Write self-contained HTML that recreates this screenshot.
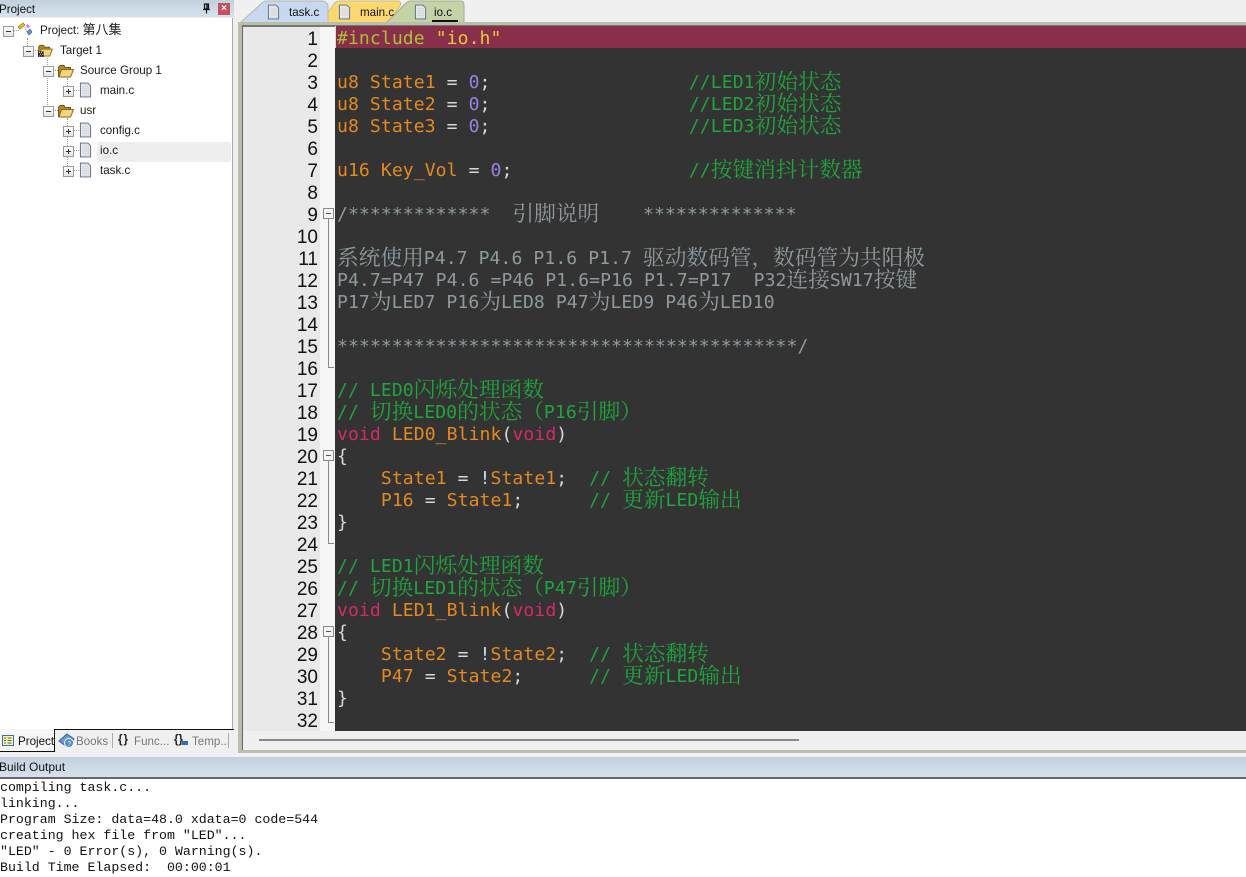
<!DOCTYPE html>
<html><head><meta charset="utf-8"><title>Project</title>
<style>
html,body{margin:0;padding:0;width:1246px;height:877px;overflow:hidden;background:#f0f0f0}
body{position:relative;font-family:"Liberation Sans","Noto Sans CJK SC",sans-serif;font-size:11.6px;color:#1a1a1a}
.a{position:absolute}
.hd{background:linear-gradient(#c2d0df,#d6e1ed)}
.t{position:absolute;white-space:pre;line-height:20px;height:20px}
.t i{font-style:normal;font-size:13px;line-height:0}
.box{position:absolute;width:9px;height:9px;border:1px solid #9a9a9a;background:linear-gradient(#fff,#e4e4e4)}
.box:before{content:"";position:absolute;left:2px;top:4px;width:5px;height:1px;background:#333}
.box.p:after{content:"";position:absolute;left:4px;top:2px;width:1px;height:5px;background:#333}
.dv{position:absolute;width:1px;border-left:1px dotted #a0a0a0}
.dh{position:absolute;height:1px;border-top:1px dotted #a0a0a0}
.ic{position:absolute}
#ed{position:absolute;left:335px;top:26px;width:911px;height:705px;background:#333;overflow:hidden}
.l{position:absolute;left:2px;margin-top:2px;height:22px;line-height:22px;white-space:pre;font-family:"DejaVu Sans Mono","Noto Serif CJK SC",monospace;font-size:18.1px;letter-spacing:.07px;color:#d8d8d8}
.l i{font-style:normal;font-family:"Noto Serif CJK SC",serif;font-size:21.7px;line-height:0;letter-spacing:0;position:relative;top:1px}
.o{color:#e48a1e}.n{color:#9a80dc}.k{color:#d42a6c}.g{color:#1fa53c}.s{color:#8f9a9f}
.m{margin-left:1px}
.num{position:absolute;left:243px;width:75px;height:22px;margin-top:2px;line-height:22px;text-align:right;font-size:19px;color:#111}
.fb{position:absolute;left:323px;width:9px;height:9px;border:1px solid #8a8a8a;background:#f4f4f4}
.fb:before{content:"";position:absolute;left:2px;top:4px;width:5px;height:1px;background:#555}
.fl{position:absolute;left:328px;width:1px;background:#8a8a8a}
.fe{position:absolute;left:328px;width:6px;height:1px;background:#8a8a8a}
.bo{position:absolute;left:0;white-space:pre;font-family:"Liberation Mono",monospace;font-size:13.25px;line-height:16px;height:16px;color:#111}
.tab{position:absolute;font-size:11.6px;white-space:pre}
</style></head><body>

<svg width="0" height="0" style="position:absolute"><defs>
<symbol id="doc" viewBox="0 0 14 16"><path d="M1.500.5h8l3 3v12h-11z" fill="#e6ecf5" stroke="#5a6a80"/><path d="M3 2h6v2h2v10H3z" fill="#d4d4d4"/><path d="M3 3h6M3 5h8M3 7h8M3 9h8M3 11h8M3 13h8" stroke="#fff" stroke-dasharray="1 1"/></symbol>
<symbol id="fold" viewBox="0 0 16 14"><path d="M.5 3.500V12.500H12.500V3.500H7L6 1.500H2z" fill="#b8861e" stroke="#6b5a20"/><path d="M1 13L3.500 5.500H15.500L12.500 13z" fill="#f4d47c" stroke="#8a6a1e"/></symbol>
</defs></svg>

<!-- Project panel -->
<div class="a hd" style="left:0;top:0;width:234px;height:17px"></div>
<div class="a" style="left:-1px;top:1px;height:17px;line-height:18px;color:#111">Project</div>
<svg class="ic" style="left:202px;top:3px" width="9" height="11" viewBox="0 0 9 11"><path d="M2.500 1h4v5h-4zM1 6.500h7M4.500 7v3.500" fill="none" stroke="#111" stroke-width="1.200"/><path d="M5 1.500v4" stroke="#111" stroke-width="1.500"/></svg>
<div class="a" style="left:218px;top:3px;width:12px;height:12px;background:#c8505a;color:#fff;font:bold 10px/12px 'Liberation Sans',sans-serif;text-align:center">×</div>
<div class="a" style="left:0;top:18px;width:232px;height:711px;background:#fff;border-right:1px solid #a8a8a8"></div>
<div class="a" style="left:97px;top:142px;width:134px;height:20px;background:#eeeeee"></div>

<div class="dv" style="left:27px;top:38px;height:10px"></div>
<div class="dv" style="left:47px;top:58px;height:55px"></div>
<div class="dv" style="left:67px;top:78px;height:10px"></div>
<div class="dv" style="left:67px;top:118px;height:50px"></div>
<div class="dh" style="left:13px;top:30px;width:6px"></div>
<div class="dh" style="left:33px;top:50px;width:5px"></div>
<div class="dh" style="left:53px;top:70px;width:5px"></div>
<div class="dh" style="left:53px;top:110px;width:5px"></div>
<div class="dh" style="left:73px;top:90px;width:6px"></div>
<div class="dh" style="left:73px;top:130px;width:6px"></div>
<div class="dh" style="left:73px;top:150px;width:6px"></div>
<div class="dh" style="left:73px;top:170px;width:6px"></div>

<div class="box" style="left:3px;top:26px"></div>
<div class="box" style="left:23px;top:46px"></div>
<div class="box" style="left:43px;top:66px"></div>
<div class="box" style="left:43px;top:106px"></div>
<div class="box p" style="left:63px;top:86px"></div>
<div class="box p" style="left:63px;top:126px"></div>
<div class="box p" style="left:63px;top:146px"></div>
<div class="box p" style="left:63px;top:166px"></div>

<svg class="ic" style="left:17px;top:21px" width="16" height="16" viewBox="0 0 16 16"><path d="M1 6L6 2l2 2-5 4z" fill="#e8c020" stroke="#806a10" stroke-width=".6"/><path d="M10 3l3 2-1 2-3-1z" fill="#d878d8"/><path d="M10 11l3-3 2 3-3 3z" fill="#5c9ae0" stroke="#2c5a98" stroke-width=".6"/><path d="M8 6l2 5" stroke="#888" stroke-dasharray="1 1"/></svg>
<svg class="ic" style="left:37px;top:44px" width="17" height="13" viewBox="0 0 16 14"><use href="#fold"/><rect x="0" y="8" width="6" height="6" fill="#222"/><path d="M1 9h1M3 9h1M2 11h1M4 11h1M1 13h1M3 13h1" stroke="#fff"/></svg>
<svg class="ic" style="left:58px;top:64px" width="16" height="14"><use href="#fold"/></svg>
<svg class="ic" style="left:58px;top:104px" width="16" height="14"><use href="#fold"/></svg>
<svg class="ic" style="left:79px;top:82px" width="13" height="16"><use href="#doc"/></svg>
<svg class="ic" style="left:79px;top:122px" width="13" height="16"><use href="#doc"/></svg>
<svg class="ic" style="left:79px;top:142px" width="13" height="16"><use href="#doc"/></svg>
<svg class="ic" style="left:79px;top:162px" width="13" height="16"><use href="#doc"/></svg>

<div class="t" style="left:40px;top:21px">Project: <i>第八集</i></div>
<div class="t" style="left:60px;top:41px">Target 1</div>
<div class="t" style="left:80px;top:61px">Source Group 1</div>
<div class="t" style="left:100px;top:81px">main.c</div>
<div class="t" style="left:80px;top:101px">usr</div>
<div class="t" style="left:100px;top:121px">config.c</div>
<div class="t" style="left:100px;top:141px">io.c</div>
<div class="t" style="left:100px;top:161px">task.c</div>

<!-- bottom tabs -->
<div class="a" style="left:54px;top:729px;width:180px;height:1px;background:#111"></div>
<div class="a" style="left:0;top:729px;width:54px;height:22px;background:#f6f6f6;border-right:1px solid #111;border-bottom:1px solid #111"></div>
<svg class="ic" style="left:2px;top:735px" width="12" height="11" viewBox="0 0 12 11"><rect x=".5" y=".5" width="11" height="10" fill="#fff2b8" stroke="#3a70b0"/><path d="M2 3h2M2 5.500h2M2 8h2M5.500 3h4M5.500 5.500h4M5.500 8h4" stroke="#3a7030"/></svg>
<div class="tab" style="left:18px;top:735px;color:#111">Project</div>
<svg class="ic" style="left:58px;top:732px" width="18" height="18" viewBox="0 0 18 18"><path d="M1 9l8-7 7 5-7 8z" fill="#6a9ad8" stroke="#3a5a98"/><circle cx="11" cy="11" r="4.500" fill="#4a8ad8" stroke="#fff"/><text x="9.200" y="14" font-size="7" fill="#fff" font-family="Liberation Sans">?</text></svg>
<div class="tab" style="left:76px;top:735px;color:#777">Books</div>
<div class="a" style="left:112px;top:733px;width:1px;height:15px;background:#aaa"></div>
<div class="tab" style="left:118px;top:733px;color:#222;font-weight:bold;letter-spacing:1px">{}</div>
<div class="tab" style="left:134px;top:735px;color:#777">Func...</div>
<div class="tab" style="left:174px;top:733px;color:#222;font-weight:bold">{}</div>
<div class="a" style="left:182px;top:741px;width:6px;height:4px;background:#2a6ac8"></div>
<div class="tab" style="left:192px;top:735px;color:#777">Temp...</div>
<div class="a" style="left:228px;top:733px;width:1px;height:15px;background:#aaa"></div>

<!-- file tabs -->
<svg class="ic" style="left:238px;top:0" width="240" height="24" viewBox="0 0 240 24">
<path d="M2 23L24 3Q26 1 29 1H84Q88 1 90 5V23z" fill="#c8d8f0" stroke="#b0b8a8"/>
<path d="M90 23V12L96 4Q98 1 102 1H160Q164 1 162 6L150 23z" fill="#fdd870" stroke="#c8c090"/>
<path d="M148 23L168 3Q170 1 173 1H222Q226 1 226 5V23z" fill="#c4d2a6" stroke="#a8b090"/>
</svg>
<svg class="ic" style="left:267px;top:4px" width="13" height="16"><use href="#doc"/></svg>
<svg class="ic" style="left:338px;top:4px" width="13" height="16"><use href="#doc"/></svg>
<svg class="ic" style="left:414px;top:4px" width="13" height="16"><use href="#doc"/></svg>
<div class="tab" style="left:289px;top:6px;color:#111">task.c</div>
<div class="tab" style="left:360px;top:6px;color:#111">main.c</div>
<div class="tab" style="left:434px;top:6px;color:#111">io.c</div>
<div class="a" style="left:432px;top:20px;width:26px;height:2px;background:#111"></div>

<!-- editor frame -->
<div class="a" style="left:238px;top:22px;width:1008px;height:3px;background:#b9c0a8"></div>
<div class="a" style="left:238px;top:25px;width:1008px;height:2px;background:#777"></div>
<div class="a" style="left:238px;top:22px;width:4px;height:731px;background:#b9c0a8"></div>
<div class="a" style="left:242px;top:25px;width:1px;height:726px;background:#666"></div>
<div class="a" style="left:238px;top:750px;width:1008px;height:3px;background:#b9c0a8"></div>
<div class="a" style="left:243px;top:27px;width:77px;height:704px;background:#e9e9e9"></div>
<div class="a" style="left:320px;top:27px;width:15px;height:704px;background:#f6f6f6"></div>
<div class="a" style="left:243px;top:731px;width:1003px;height:19px;background:#f0f0f0"></div>
<div class="a" style="left:259px;top:739px;width:540px;height:2px;background:#888"></div>

<div class="num" style="top:27px">1</div><div class="num" style="top:49px">2</div><div class="num" style="top:71px">3</div><div class="num" style="top:93px">4</div><div class="num" style="top:115px">5</div><div class="num" style="top:137px">6</div><div class="num" style="top:159px">7</div><div class="num" style="top:181px">8</div><div class="num" style="top:203px">9</div><div class="num" style="top:225px">10</div><div class="num" style="top:247px">11</div><div class="num" style="top:269px">12</div><div class="num" style="top:291px">13</div><div class="num" style="top:313px">14</div><div class="num" style="top:335px">15</div><div class="num" style="top:357px">16</div><div class="num" style="top:379px">17</div><div class="num" style="top:401px">18</div><div class="num" style="top:423px">19</div><div class="num" style="top:445px">20</div><div class="num" style="top:467px">21</div><div class="num" style="top:489px">22</div><div class="num" style="top:511px">23</div><div class="num" style="top:533px">24</div><div class="num" style="top:555px">25</div><div class="num" style="top:577px">26</div><div class="num" style="top:599px">27</div><div class="num" style="top:621px">28</div><div class="num" style="top:643px">29</div><div class="num" style="top:665px">30</div><div class="num" style="top:687px">31</div><div class="num" style="top:709px">32</div>

<div class="fl" style="top:219px;height:148px"></div><div class="fe" style="top:367px"></div>
<div class="fl" style="top:461px;height:82px"></div><div class="fe" style="top:543px"></div>
<div class="fl" style="top:637px;height:85px"></div><div class="fe" style="top:722px"></div>
<div class="fb" style="top:208px"></div>
<div class="fb" style="top:450px"></div>
<div class="fb" style="top:626px"></div>

<div id="ed">
<div class="a" style="left:0;top:0;width:911px;height:22px;background:#8a2f49"></div>
<div class="a" style="left:0;top:0;width:1px;height:22px;background:#ddd"></div>
<div class="l" style="top:0"><span style="color:#a8c03a">#include</span> <span style="color:#e8c83c">"io.h"</span></div>
<div class="l" style="top:44px"><span class="o">u8 State1</span> = <span class="n">0</span>;                  <span class="g m">//LED1<i>初始状态</i></span></div>
<div class="l" style="top:66px"><span class="o">u8 State2</span> = <span class="n">0</span>;                  <span class="g m">//LED2<i>初始状态</i></span></div>
<div class="l" style="top:88px"><span class="o">u8 State3</span> = <span class="n">0</span>;                  <span class="g m">//LED3<i>初始状态</i></span></div>
<div class="l" style="top:132px"><span class="o">u16 Key_Vol</span> = <span class="n">0</span>;                <span class="g m">//<i>按键消抖计数器</i></span></div>
<div class="l s" style="top:176px">/*************  <i>引脚说明</i>    **************</div>
<div class="l s" style="top:220px"><i>系统使用</i>P4.7 P4.6 P1.6 P1.7 <i>驱动数码管，数码管为共阳极</i></div>
<div class="l s" style="top:242px">P4.7=P47 P4.6 =P46 P1.6=P16 P1.7=P17  P32<i>连接</i>SW17<i>按键</i></div>
<div class="l s" style="top:264px">P17<i>为</i>LED7 P16<i>为</i>LED8 P47<i>为</i>LED9 P46<i>为</i>LED10</div>
<div class="l s" style="top:308px">******************************************/</div>
<div class="l g" style="top:352px">// LED0<i>闪烁处理函数</i></div>
<div class="l g" style="top:374px">// <i>切换</i>LED0<i>的状态（</i>P16<i>引脚）</i></div>
<div class="l" style="top:396px"><span class="k">void</span> <span class="o">LED0_Blink</span>(<span class="k">void</span>)</div>
<div class="l" style="top:418px">{</div>
<div class="l" style="top:440px">    <span class="o">State1</span> = !<span class="o">State1</span>;  <span class="g">// <i>状态翻转</i></span></div>
<div class="l" style="top:462px">    <span class="o">P16</span> = <span class="o">State1</span>;      <span class="g">// <i>更新</i>LED<i>输出</i></span></div>
<div class="l" style="top:484px">}</div>
<div class="l g" style="top:528px">// LED1<i>闪烁处理函数</i></div>
<div class="l g" style="top:550px">// <i>切换</i>LED1<i>的状态（</i>P47<i>引脚）</i></div>
<div class="l" style="top:572px"><span class="k">void</span> <span class="o">LED1_Blink</span>(<span class="k">void</span>)</div>
<div class="l" style="top:594px">{</div>
<div class="l" style="top:616px">    <span class="o">State2</span> = !<span class="o">State2</span>;  <span class="g">// <i>状态翻转</i></span></div>
<div class="l" style="top:638px">    <span class="o">P47</span> = <span class="o">State2</span>;      <span class="g">// <i>更新</i>LED<i>输出</i></span></div>
<div class="l" style="top:660px">}</div>
</div>

<!-- build output -->
<div class="a hd" style="left:0;top:757px;width:1246px;height:20px"></div>
<div class="a" style="left:-1px;top:759px;height:16px;line-height:16px;font-size:12px;color:#111">Build Output</div>
<div class="a" style="left:0;top:777px;width:1246px;height:2px;background:#666"></div>
<div class="a" style="left:0;top:779px;width:1246px;height:98px;background:#fff"></div>
<div class="bo" style="top:780px">compiling task.c...</div>
<div class="bo" style="top:796px">linking...</div>
<div class="bo" style="top:812px">Program Size: data=48.0 xdata=0 code=544</div>
<div class="bo" style="top:828px">creating hex file from "LED"...</div>
<div class="bo" style="top:844px">"LED" - 0 Error(s), 0 Warning(s).</div>
<div class="bo" style="top:860px">Build Time Elapsed:  00:00:01</div>
</body></html>
